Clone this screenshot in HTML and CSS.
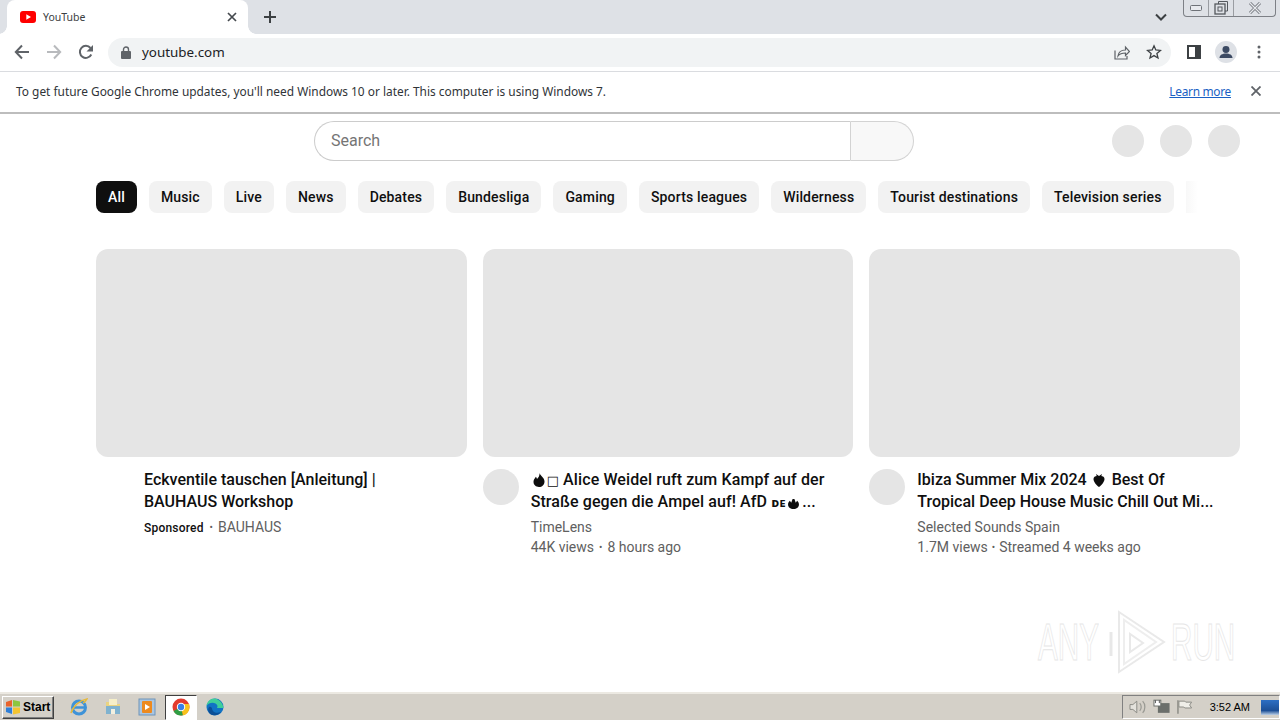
FILE: index.html
```html
<!DOCTYPE html>
<html lang="en">
<head>
<meta charset="utf-8">
<title>YouTube</title>
<link rel="stylesheet" href="styles.css">
</head>
<body>
<div class="browser">
  <header class="tabstrip">
    <div class="tab">
      <svg class="favicon" width="16" height="12" viewBox="0 0 16 12"><rect width="16" height="12" rx="3" fill="#f00"/><path d="M6.300 3.200 11 6l-4.700 2.800z" fill="#fff"/></svg>
      <span class="tab-title">YouTube</span>
      <svg class="tab-close" width="10" height="10" viewBox="0 0 10 10"><path d="M1 1l8 8M9 1l-8 8" stroke="#45494e" stroke-width="1.700"/></svg>
    </div>
    <svg class="newtab" width="12" height="12" viewBox="0 0 12 12"><path d="M6 0v12M0 6h12" stroke="#3c4043" stroke-width="2"/></svg>
    <svg class="tabsearch" width="12" height="8" viewBox="0 0 12 8"><path d="M1 1.500l5 5 5-5" fill="none" stroke="#3c4043" stroke-width="2"/></svg>
    <div class="winctl">
      <span class="winbtn win-min"><svg width="12" height="6" viewBox="0 0 12 6"><rect x=".5" y=".5" width="11" height="5" rx="1" fill="#e8eaee" stroke="#6e7278"/></svg></span>
      <span class="winbtn win-max"><svg width="14" height="14" viewBox="0 0 14 14"><path d="M4.500 3V.5h9V10H11" fill="none" stroke="#54585e"/><rect x="1" y="3" width="10" height="10" fill="none" stroke="#54585e" stroke-width="1.300"/><rect x="4" y="6" width="4" height="4" fill="none" stroke="#54585e"/></svg></span>
      <span class="winbtn win-close"><svg width="14" height="12" viewBox="0 0 14 12"><path d="M2 1l10 10M12 1L2 11" stroke="#767a80" stroke-width="3"/><path d="M2 1l10 10M12 1L2 11" stroke="#e8eaee" stroke-width="1.200"/></svg></span>
    </div>
  </header>

  <div class="toolbar">
    <svg class="tb-back" width="16" height="16" viewBox="0 0 16 16"><path d="M15 8H2M8 1.500 1.800 8 8 14.500" fill="none" stroke="#5f6368" stroke-width="2"/></svg>
    <svg class="tb-fwd" width="16" height="16" viewBox="0 0 16 16"><path d="M1 8h13M8 1.500 14.200 8 8 14.500" fill="none" stroke="#b8babd" stroke-width="2"/></svg>
    <svg class="tb-reload" width="16" height="16" viewBox="0 0 16 16"><path d="M13.300 10.500A6 6 0 1 1 12.500 4" fill="none" stroke="#5f6368" stroke-width="2"/><path d="M15 1v6.500H8.500z" fill="#5f6368"/></svg>
    <div class="omnibox">
      <svg class="lock" width="10" height="13" viewBox="0 0 10 13"><path d="M2.500 5.500V3.500a2.500 2.500 0 0 1 5 0v2" fill="none" stroke="#5f6368" stroke-width="1.400"/><rect y="5" width="10" height="8" rx="1" fill="#5f6368"/></svg>
      <span class="url">youtube.com</span>
      <svg class="share" width="16" height="16" viewBox="0 0 16 16"><path d="M1 6.500V15h12v-3" fill="none" stroke="#5f6368" stroke-width="1.200"/><path d="M4 12c.5-4 3.500-6 7.500-6V3l4 4.500-4 4V9C8 9 5.500 10 4 12z" fill="none" stroke="#5f6368" stroke-width="1.200"/></svg>
      <svg class="star" width="16" height="16" viewBox="0 0 16 16"><path d="M8 1.800 9.800 6l4.700.4-3.600 3 1.100 4.600L8 11.600 4 14l1.100-4.600-3.600-3L6.200 6z" fill="none" stroke="#3c4043" stroke-width="1.300"/></svg>
    </div>
    <svg class="sidepanel" width="14" height="14" viewBox="0 0 14 14"><rect x="1" y="1" width="12" height="12" fill="#fff" stroke="#3c4043" stroke-width="2"/><rect x="8" y="1" width="5" height="12" fill="#3c4043"/></svg>
    <svg class="profile" width="22" height="22" viewBox="0 0 22 22"><circle cx="11" cy="11" r="11" fill="#dee1e6"/><circle cx="11" cy="8.500" r="3.500" fill="#3c4a63"/><path d="M4.500 17c0-3 3-4.500 6.500-4.500s6.500 1.500 6.500 4.500z" fill="#3c4a63"/></svg>
    <svg class="kebab" width="4" height="14" viewBox="0 0 4 14"><circle cx="2" cy="2" r="1.500" fill="#5f6368"/><circle cx="2" cy="7" r="1.500" fill="#5f6368"/><circle cx="2" cy="12" r="1.500" fill="#5f6368"/></svg>
  </div>

  <div class="infobar">
    <span class="info-text">To get future Google Chrome updates, you'll need Windows 10 or later. This computer is using Windows 7.</span>
    <a class="info-link" href="#">Learn more</a>
    <svg class="info-close" width="10" height="10" viewBox="0 0 10 10"><path d="M.5.500l9 9M9.500.500l-9 9" stroke="#5f6368" stroke-width="1.800"/></svg>
  </div>

  <main class="page">
    <div class="masthead">
      <div class="search">
        <div class="search-input">Search</div>
        <div class="search-btn"></div>
      </div>
      <div class="mast-actions">
        <span class="mast-dot"></span><span class="mast-dot"></span><span class="mast-dot"></span>
      </div>
    </div>

    <nav class="chips">
      <span class="chip chip-active">All</span>
      <span class="chip">Music</span>
      <span class="chip">Live</span>
      <span class="chip">News</span>
      <span class="chip">Debates</span>
      <span class="chip">Bundesliga</span>
      <span class="chip">Gaming</span>
      <span class="chip">Sports leagues</span>
      <span class="chip">Wilderness</span>
      <span class="chip">Tourist destinations</span>
      <span class="chip">Television series</span>
      <span class="chip-fade"></span>
    </nav>

    <section class="grid">
      <article class="card">
        <div class="thumb"></div>
        <div class="details">
          <div class="avatar avatar-none"></div>
          <div class="info">
            <h3 class="title"><span class="line">Eckventile tauschen [Anleitung] |</span><span class="line">BAUHAUS Workshop</span></h3>
            <p class="meta meta-ad"><b class="sponsored">Sponsored</b><span class="sep">•</span>BAUHAUS</p>
          </div>
        </div>
      </article>
      <article class="card">
        <div class="thumb"></div>
        <div class="details">
          <div class="avatar"></div>
          <div class="info">
            <h3 class="title"><span class="line spaced"><svg class="emoji" width="12" height="14" viewBox="0 0 12 14"><path d="M6.500 0c.5 2.500 5 4.500 5 8.500C11.500 12 9 14 6 14S.5 12 .5 8.800C.5 6.500 2 5.500 2.800 3.800c.7.700 1 1.500 1.200 2.200C5.500 4.500 6.800 2.500 6.500 0z" fill="#0d0d0d"/></svg><span class="tofu">□</span> Alice Weidel ruft zum Kampf auf der</span><span class="line spaced">Straße gegen die Ampel auf! AfD <span class="smallcaps">ᴅᴇ</span><svg class="emoji" width="11" height="10" viewBox="0 0 12 11"><path d="M6 11C2.500 11 0 9 0 6c0-2 1-3 2-4l1.500 2L5 0h2l1.500 4L10 2c1 1 2 2 2 4 0 3-2.500 5-6 5z" fill="#0d0d0d"/></svg>...</span></h3>
            <p class="meta">TimeLens</p>
            <p class="meta wide-sep">44K views<span class="sep">•</span>8 hours ago</p>
          </div>
        </div>
      </article>
      <article class="card">
        <div class="thumb"></div>
        <div class="details">
          <div class="avatar"></div>
          <div class="info">
            <h3 class="title"><span class="line">Ibiza Summer Mix 2024 <svg class="emoji" width="12" height="14" viewBox="0 0 12 14"><path d="M6 14C3 12 .5 8.500.5 6 .5 4 2 3 4 3l2 .5L8 3c2 0 3.500 1 3.500 3 0 2.500-2.500 6-5.500 8z" fill="#0d0d0d"/><path d="M3 1l3 2 3-2-1 3H4z" fill="#0d0d0d"/></svg> Best Of</span><span class="line">Tropical Deep House Music Chill Out Mi...</span></h3>
            <p class="meta">Selected Sounds Spain</p>
            <p class="meta">1.7M views<span class="sep">•</span>Streamed 4 weeks ago</p>
          </div>
        </div>
      </article>
    </section>

    <div class="watermark" aria-hidden="true">
      <span class="wm-text">ANY</span>
      <svg class="wm-logo" width="58" height="64" viewBox="0 0 58 64"><path d="M3 22v24" stroke="#e8e8e8" stroke-width="3"/><path d="M11 2v60l45-30z" fill="none" stroke="#e9e9e9" stroke-width="2"/><path d="M16 10v44l32-22z" fill="none" stroke="#eeeeee" stroke-width="2"/><path d="M22 24v18l13-9z" fill="none" stroke="#e9e9e9" stroke-width="2"/></svg>
      <span class="wm-text">RUN</span>
    </div>
  </main>

  <footer class="taskbar">
    <div class="start">
      <svg width="16" height="16" viewBox="0 0 16 16"><path d="M1 3l6-2v6.500H1z" fill="#e8632c"/><path d="M8 1l7 1.500V7.500H8z" fill="#8cc63f"/><path d="M1 8.500h6V15l-6-2z" fill="#2f7fd8"/><path d="M8 8.500h7V14l-7 1.500z" fill="#f4c430"/></svg>
      <span>Start</span>
    </div>
    <div class="quick">
      <span class="qi"><svg width="18" height="18" viewBox="0 0 18 18"><circle cx="9" cy="9.500" r="6.500" fill="none" stroke="#3f93d8" stroke-width="3"/><path d="M3.500 9.500h11" stroke="#3f93d8" stroke-width="2.500"/><path d="M1 15C3 8 10 2 17 1c-1 2-2 3-4 4" fill="none" stroke="#e6b93c" stroke-width="1.500"/></svg></span>
      <span class="qi"><svg width="18" height="18" viewBox="0 0 18 18"><path d="M2 4h5l1 2h8v10H2z" fill="#e9d382"/><rect x="5" y="1" width="8" height="6" fill="#f6efc8"/><rect x="2" y="8" width="14" height="8" fill="#7fb2cf"/><rect x="7" y="11" width="4" height="5" fill="#f2f0e0"/></svg></span>
      <span class="qi"><svg width="18" height="18" viewBox="0 0 18 18"><rect x="1" y="1" width="16" height="16" fill="#a9c6e2" stroke="#6f93b8"/><rect x="4" y="3" width="10" height="12" rx="1" fill="#ed8a1f"/><path d="M7 6l5 3-5 3z" fill="#fff"/></svg></span>
      <span class="qi qi-active"><svg width="18" height="18" viewBox="0 0 18 18"><circle cx="9" cy="9" r="8.500" fill="#e33b2e"/><path d="M9 9 1.500 13A8.500 8.500 0 0 0 9 17.500c1 0 2 0 2-.5z" fill="#2f9e44"/><path d="M9 9l2 8.500A8.500 8.500 0 0 0 17.500 9c0-1-.2-2-.5-3H9z" fill="#f8c21c"/><circle cx="9" cy="9" r="4.200" fill="#fff"/><circle cx="9" cy="9" r="3.200" fill="#3a7fe6"/></svg></span>
      <span class="qi"><svg width="18" height="18" viewBox="0 0 18 18"><circle cx="9" cy="9" r="8.500" fill="#1173c4"/><path d="M17.500 10C17 5 13 1 8.500.5 4 .5 1 4 .5 8c2-3 6-4 9-2.500 2 1 2.500 3 1.500 4.500h6.500z" fill="#3fcf9a"/><path d="M6 10c0 4 4 6 9 4-3 4-8 4-11 2-2-2-2.500-5-1-7 1-.5 2 0 3 1z" fill="#0b4f96"/></svg></span>
    </div>
    <div class="tray">
      <svg width="18" height="16" viewBox="0 0 18 16"><path d="M1 5.500h3L8 2v12L4 10.500H1z" fill="#e4e2dc" stroke="#8b8b85"/><path d="M11 4c2 2 2 6 0 8M14 2c3 3 3 9 0 12" fill="none" stroke="#9a9a94" stroke-width="1.300"/></svg>
      <svg width="18" height="16" viewBox="0 0 18 16"><rect x="5" y="4" width="12" height="10" fill="#6b6f6b"/><rect x="1" y="1" width="7" height="6" fill="#fff" stroke="#6b6f6b"/><path d="M2.500 1v3M6.500 1v3" stroke="#555"/></svg>
      <svg width="18" height="16" viewBox="0 0 18 16"><path d="M2 1v14" stroke="#8b8b85" stroke-width="1.500"/><path d="M3 2h6l1 1h6l-2 3 2 3h-7l-1-1H3z" fill="#efeee8" stroke="#8b8b85"/></svg>
      <span class="clock">3:52 AM</span>
      <span class="desktop"></span>
    </div>
  </footer>
</div>
</body>
</html>
```
FILE: styles.css
```css
* { box-sizing: border-box; margin: 0; padding: 0; }
html, body { width: 1280px; height: 720px; overflow: hidden; background: #fff; }
body { font-family: Roboto, "Liberation Sans", sans-serif; color: #0f0f0f; }
.browser { display: flex; flex-direction: column; width: 1280px; height: 720px; }

/* tab strip */
.tabstrip { flex: 0 0 34px; display: flex; align-items: center; background: #dee1e6; padding-left: 7px; }
.tab { position: relative; width: 241px; height: 34px; align-self: flex-end; background: #fff; border-radius: 8px 8px 0 0; display: flex; align-items: center; padding: 0 11px 0 13px; }
.tab::before, .tab::after { content: ""; position: absolute; bottom: 0; width: 8px; height: 8px; }
.tab::before { left: -8px; background: radial-gradient(circle at 0 0, #dee1e6 7.500px, #fff 8px); }
.tab::after { right: -8px; background: radial-gradient(circle at 100% 0, #dee1e6 7.500px, #fff 8px); }
.favicon { flex: none; }
.tab-title { flex: 1; margin-left: 7px; font: 10.500px "Noto Sans", sans-serif; color: #3c4043; }
.newtab { margin-left: 16px; }
.tabsearch { margin-left: 879px; margin-top: -1px; }
.winctl { align-self: flex-start; margin-left: 16px; width: 93px; height: 17px; display: flex; background: #dee1e6; border: 1px solid #7d8086; border-top: 0; border-radius: 0 0 4px 4px; }
.winbtn { display: flex; align-items: center; justify-content: center; border-right: 1px solid #9a9da2; height: 16px; }
.win-min { width: 25px; }
.win-max { width: 25px; }
.win-close { flex: 1; border-right: 0; }

/* toolbar */
.toolbar { flex: 0 0 38px; display: flex; align-items: center; background: #fff; border-bottom: 1px solid #dadce0; padding: 0 19px 1px 14px; }
.tb-fwd { margin-left: 16px; }
.tb-reload { margin-left: 16px; }
.omnibox { margin-left: 14px; width: 1064px; height: 29px; border-radius: 15px; background: #f1f3f4; display: flex; align-items: center; padding: 0 10px 0 13px; }
.url { flex: 1; margin-left: 11px; font: 13.400px "Noto Sans", sans-serif; color: #202124; }
.share { margin-right: 16px; position: relative; left: 1px; }
.star { position: relative; left: 1px; }
.sidepanel { margin-left: 15px; position: relative; left: 1px; }
.profile { margin-left: 15px; }
.kebab { margin-left: 20px; }

/* infobar */
.infobar { flex: 0 0 42px; display: flex; align-items: center; background: #fff; border-bottom: 2px solid #bdbdbd; padding: 0 19px 2px 16px; }
.info-text { flex: 1; font: 11.900px "Noto Sans", sans-serif; color: #303438; }
.info-link { font: 11.900px "Noto Sans", sans-serif; letter-spacing: -.3px; color: #1a5fc4; text-decoration: underline; }
.info-close { margin-left: 20px; }

/* page */
.page { flex: 1; position: relative; overflow: hidden; padding: 7px 40px 0 96px; background: #fff; }
.masthead { display: flex; align-items: center; height: 40px; }
.search { margin-left: 218px; width: 600px; height: 40px; display: flex; }
.search-input { flex: 1; border: 1px solid #ccc; border-right: 1px solid #d3d3d3; border-radius: 20px 0 0 20px; padding-left: 16px; line-height: 38px; font-size: 16px; color: #757575; }
.search-btn { width: 63px; background: #f8f8f8; border: 1px solid #d3d3d3; border-left: 0; border-radius: 0 20px 20px 0; }
.mast-actions { margin-left: auto; display: flex; gap: 16px; }
.mast-dot { width: 32px; height: 32px; border-radius: 50%; background: #e5e5e5; }

.chips { display: flex; gap: 12px; margin-top: 20px; height: 32px; }
.chip { flex: none; height: 32px; padding: 0 12px; border-radius: 8px; background: #f2f2f2; font-size: 14px; font-weight: 500; line-height: 32px; color: #0f0f0f; letter-spacing: .16px; }
.chip-active { background: #0f0f0f; color: #fff; }
.chip-fade { width: 12px; height: 32px; background: linear-gradient(to right, #f8f8f8, #fff); }

.grid { display: grid; grid-template-columns: repeat(3, 1fr); column-gap: 16px; margin-top: 36px; }
.thumb { height: 208px; border-radius: 12px; background: #e5e5e5; }
.details { display: flex; margin-top: 12px; }
.avatar { flex: none; width: 36px; height: 36px; border-radius: 50%; background: #e5e5e5; margin-right: 12px; }
.avatar-none { background: transparent; }
.info { min-width: 0; }
.title { font-size: 16px; font-weight: 500; line-height: 22px; color: #0f0f0f; margin-bottom: 4px; }
.line { display: block; height: 22px; white-space: nowrap; }
.spaced { letter-spacing: .1px; }
.emoji { vertical-align: -2px; margin: 0 3px 0 2px; }
.tofu { font-family: "DejaVu Sans", sans-serif; font-size: 13px; font-weight: 400; margin-left: -1px; }
.smallcaps { font-family: "DejaVu Sans", sans-serif; font-size: 12px; font-weight: 700; }
.meta { font-size: 14px; line-height: 20px; color: #606060; }
.sponsored { font-size: 12px; font-weight: 500; color: #0f0f0f; letter-spacing: .2px; }
.sep { margin: 0 4px; font-size: 10px; vertical-align: 1px; }
.meta-ad .sep { margin: 0 5px 0 6px; }
.wide-sep .sep { margin: 0 5px; }

.watermark { position: absolute; left: 1038px; top: 496px; display: flex; align-items: center; }
.wm-text { width: 62px; font: 52px/64px "Liberation Sans", sans-serif; color: #fff; -webkit-text-stroke: 1px #e6e6e6; transform: scaleX(.57); transform-origin: left center; white-space: nowrap; }
.wm-logo { margin: 0 5px 0 8px; }

/* taskbar */
.taskbar { flex: 0 0 28px; display: flex; align-items: center; background: #d4d0c8; border-top: 2px solid #ece9e2; padding: 0 0 0 2px; }
.start { width: 52px; height: 23px; display: flex; align-items: center; gap: 2px; padding-left: 2px; background: #d4d0c8; border: 1px solid; border-color: #fff #404040 #404040 #fff; box-shadow: inset -1px -1px 0 #808080; font: 700 12px "Liberation Sans", sans-serif; color: #000; }
.quick { display: flex; align-items: center; margin-left: 9px; }
.qi { width: 32px; height: 26px; margin-right: 2px; display: flex; align-items: center; justify-content: center; }
.qi-active { width: 32px; height: 25px; background: #fff; border: 1px solid; border-color: #404040 #fff #fff #404040; }
.tray { margin-left: auto; width: 158px; height: 24px; display: flex; align-items: center; gap: 6px; padding-left: 6px; border: 1px solid; border-color: #808080 #fff #fff #808080; }
.clock { margin-left: 10px; font: 11px "Liberation Sans", sans-serif; color: #000; white-space: nowrap; }
.desktop { flex: none; width: 18px; height: 15px; margin-left: 5px; background: linear-gradient(#2d6fc4, #1d4f96 70%, #bcd0e6); }
```
